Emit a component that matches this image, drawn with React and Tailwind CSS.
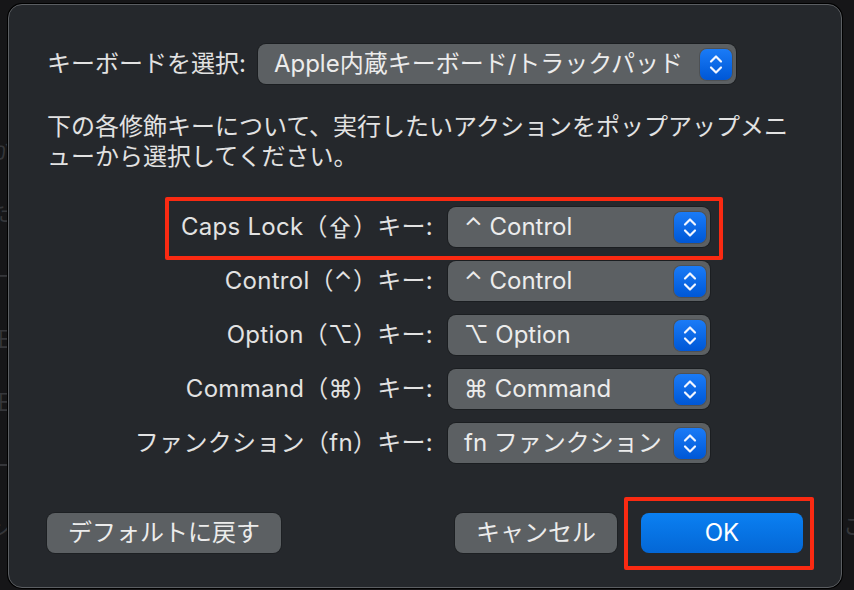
import React from "react";

const font = { fontFamily: 'Inter, "Noto Sans CJK JP", sans-serif' };

function Stepper() {
  return (
    <div className="w-[32px] h-[31px] rounded-[7px] bg-gradient-to-b from-[#1a7bf7] to-[#0057d6] flex items-center justify-center shadow-[0_0_0_1px_rgba(0,0,0,0.15)]">
      <svg width="32" height="31" viewBox="0 0 32 31" fill="none">
        <path d="M11 12.5 L16 7.5 L21 12.5" stroke="#f2f6ff" strokeWidth="2.2" strokeLinecap="round" strokeLinejoin="round" />
        <path d="M11 18.5 L16 23.5 L21 18.5" stroke="#f2f6ff" strokeWidth="2.2" strokeLinecap="round" strokeLinejoin="round" />
      </svg>
    </div>
  );
}

function Popup({ label, width }) {
  return (
    <div
      className="h-[40px] rounded-[8px] bg-[#5c6063] flex items-center justify-between pl-[16px] pr-[4px] shadow-[0_0_0_1px_rgba(0,0,0,0.25)]"
      style={{ width }}
    >
      <span className="text-[#ececec] whitespace-nowrap">{label}</span>
      <Stepper />
    </div>
  );
}

const rows = [
  { key: "Caps Lock（⇪）キー:", value: "⌃ Control" },
  { key: "Control（⌃）キー:", value: "⌃ Control" },
  { key: "Option（⌥）キー:", value: "⌥ Option" },
  { key: "Command（⌘）キー:", value: "⌘ Command" },
  { key: "ファンクション（fn）キー:", value: "fn ファンクション" },
];

export default function App() {
  return (
    <div className="w-[854px] h-[590px] bg-[#161618] relative overflow-hidden text-[24px]" style={font}>
      {/* faint background window text */}
      <div className="absolute left-[-10px] top-[135px] text-[#35363a] text-[22px] leading-[30px] flex flex-col gap-[33px]">
        <span>か</span>
        <span>た</span>
        <span>一</span>
        <span>田</span>
        <span>田</span>
        <span>ー</span>
        <span>ン</span>
      </div>
      <div className="absolute left-[843px] top-[510px] text-[#35363a] text-[22px]">こ</div>

      <div className="ml-[8px] mt-[4px] w-[834px] h-[584px] rounded-[14px] bg-[#25282c] border border-[#5b5e62] shadow-[0_0_0_1px_#000] relative pt-[39px] px-[38px] text-[#e2e2e2]">
        <div className="flex items-center h-[40px]">
          <span className="whitespace-nowrap">キーボードを選択:</span>
          <div className="ml-[12px]">
            <Popup label="Apple内蔵キーボード/トラックパッド" width={478} />
          </div>
        </div>

        <p className="mt-[28px] leading-[30px] whitespace-nowrap">
          下の各修飾キーについて、実行したいアクションをポップアップメニ
          <br />
          ューから選択してください。
        </p>

        <div className="mt-[35px] flex flex-col gap-[14px]">
          {rows.map((r) => (
            <div key={r.key} className="flex items-center h-[40px]">
              <span className="w-[386px] text-right whitespace-nowrap tracking-[0.3px]">{r.key}</span>
              <div className="ml-[15px]">
                <Popup label={r.value} width={262} />
              </div>
            </div>
          ))}
        </div>

        <div className="mt-[50px] flex items-center justify-between">
          <button className="w-[234px] h-[40px] rounded-[8px] bg-[#5c6063] text-[#ececec] shadow-[0_0_0_1px_rgba(0,0,0,0.2)]">
            デフォルトに戻す
          </button>
          <div className="flex gap-[24px]">
            <button className="w-[162px] h-[40px] rounded-[8px] bg-[#5c6063] text-[#ececec] shadow-[0_0_0_1px_rgba(0,0,0,0.2)]">
              キャンセル
            </button>
            <button className="w-[162px] h-[40px] rounded-[8px] bg-gradient-to-b from-[#0b80f2] to-[#0467d6] text-white">
              OK
            </button>
          </div>
        </div>

        {/* annotation boxes */}
        <div className="absolute left-[156px] top-[192px] w-[558px] h-[63px] border-[4px] border-[#fa2a12] rounded-[2px]" />
        <div className="absolute left-[615px] top-[492px] w-[190px] h-[73px] border-[4px] border-[#fa2a12] rounded-[2px]" />
      </div>
    </div>
  );
}
